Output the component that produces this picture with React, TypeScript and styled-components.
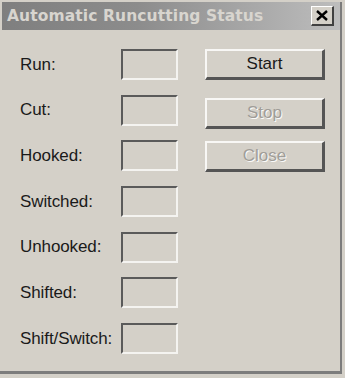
import styled, { createGlobalStyle } from 'styled-components'

const GlobalStyle = createGlobalStyle`
  html, body {
    margin: 0;
    padding: 0;
    background: #d4d0c8;
  }
`

const colors = {
  face: '#d4d0c8',
  shadow: '#808080',
  darkShadow: '#404040',
  highlight: '#ffffff',
  text: '#1a1a1a',
  disabled: '#a09d98'
}

const Screen = styled.div`
  width: 345px;
  height: 378px;
  background: ${colors.face};
  overflow: hidden;
`

const Window = styled.div`
  width: 342px;
  height: 372px;
  background: ${colors.face};
  border-right: 2px solid #7c7c7c;
  border-bottom: 3px solid #7c7c7c;
  box-sizing: border-box;
  font-family: "Liberation Sans", Arial, sans-serif;
`

const TitleBar = styled.div`
  height: 28px;
  margin: 2px 0 0 2px;
  background: linear-gradient(to right, #7f7f7f, #8c8c8c 40%, #bdbdbd);
  display: flex;
  align-items: center;
  justify-content: space-between;
  padding: 0 6px 0 5px;
`

const Title = styled.span`
  color: #d8d5cf;
  font-weight: 700;
  font-family: "DejaVu Sans", Verdana, sans-serif;
  font-size: 15.5px;
  letter-spacing: 0.1px;
`

const CloseBox = styled.div`
  width: 23px;
  height: 20px;
  box-sizing: border-box;
  background: ${colors.face};
  border-top: 1px solid ${colors.highlight};
  border-left: 1px solid ${colors.highlight};
  border-right: 2px solid ${colors.darkShadow};
  border-bottom: 2px solid ${colors.darkShadow};
  display: flex;
  align-items: center;
  justify-content: center;
`

const Body = styled.div`
  display: flex;
  align-items: flex-start;
  padding: 19px 0 0 20px;
`

const Fields = styled.div`
  display: flex;
  flex-direction: column;
  gap: 14.7px;
`

const Row = styled.div`
  display: flex;
  align-items: center;
  height: 31px;
`

const Label = styled.span`
  width: 101px;
  font-size: 17px;
  line-height: 20px;
  color: ${colors.text};
  letter-spacing: -0.1px;
  white-space: nowrap;
`

const Field = styled.div`
  width: 57px;
  height: 31px;
  flex-shrink: 0;
  box-sizing: border-box;
  border-top: 2px solid #5a5a5a;
  border-left: 2px solid #5a5a5a;
  border-right: 2px solid #f4f3f0;
  border-bottom: 2px solid #f4f3f0;
  background: ${colors.face};
`

const Buttons = styled.div`
  display: flex;
  flex-direction: column;
  margin-left: 27px;
`

const Button = styled.div<{ $disabled?: boolean; $gap?: number }>`
  width: 120px;
  height: 31px;
  margin-top: ${({ $gap }) => $gap ?? 0}px;
  box-sizing: border-box;
  background: ${colors.face};
  border-top: 2px solid #f8f7f5;
  border-left: 2px solid #f8f7f5;
  border-right: 3px solid #555;
  border-bottom: 3px solid #555;
  display: flex;
  align-items: center;
  justify-content: center;
  font-size: 17px;
  line-height: 20px;
  color: ${({ $disabled }) => ($disabled ? colors.disabled : colors.text)};
  text-shadow: ${({ $disabled }) => ($disabled ? '1px 1px 0 #fbfaf8' : 'none')};
`

const rows = ['Run:', 'Cut:', 'Hooked:', 'Switched:', 'Unhooked:', 'Shifted:', 'Shift/Switch:']

function App (): JSX.Element {
  return (
    <Screen>
      <GlobalStyle />
      <Window>
        <TitleBar>
          <Title>Automatic Runcutting Status</Title>
          <CloseBox>
            <svg width='12' height='11' viewBox='0 0 12 11'>
              <path d='M1 1 L11 10 M11 1 L1 10' stroke='#000' strokeWidth='2.4' />
            </svg>
          </CloseBox>
        </TitleBar>
        <Body>
          <Fields>
            {rows.map((label) => (
              <Row key={label}>
                <Label>{label}</Label>
                <Field />
              </Row>
            ))}
          </Fields>
          <Buttons>
            <Button>Start</Button>
            <Button $disabled $gap={18}>Stop</Button>
            <Button $disabled $gap={12}>Close</Button>
          </Buttons>
        </Body>
      </Window>
    </Screen>
  )
}

export default App
